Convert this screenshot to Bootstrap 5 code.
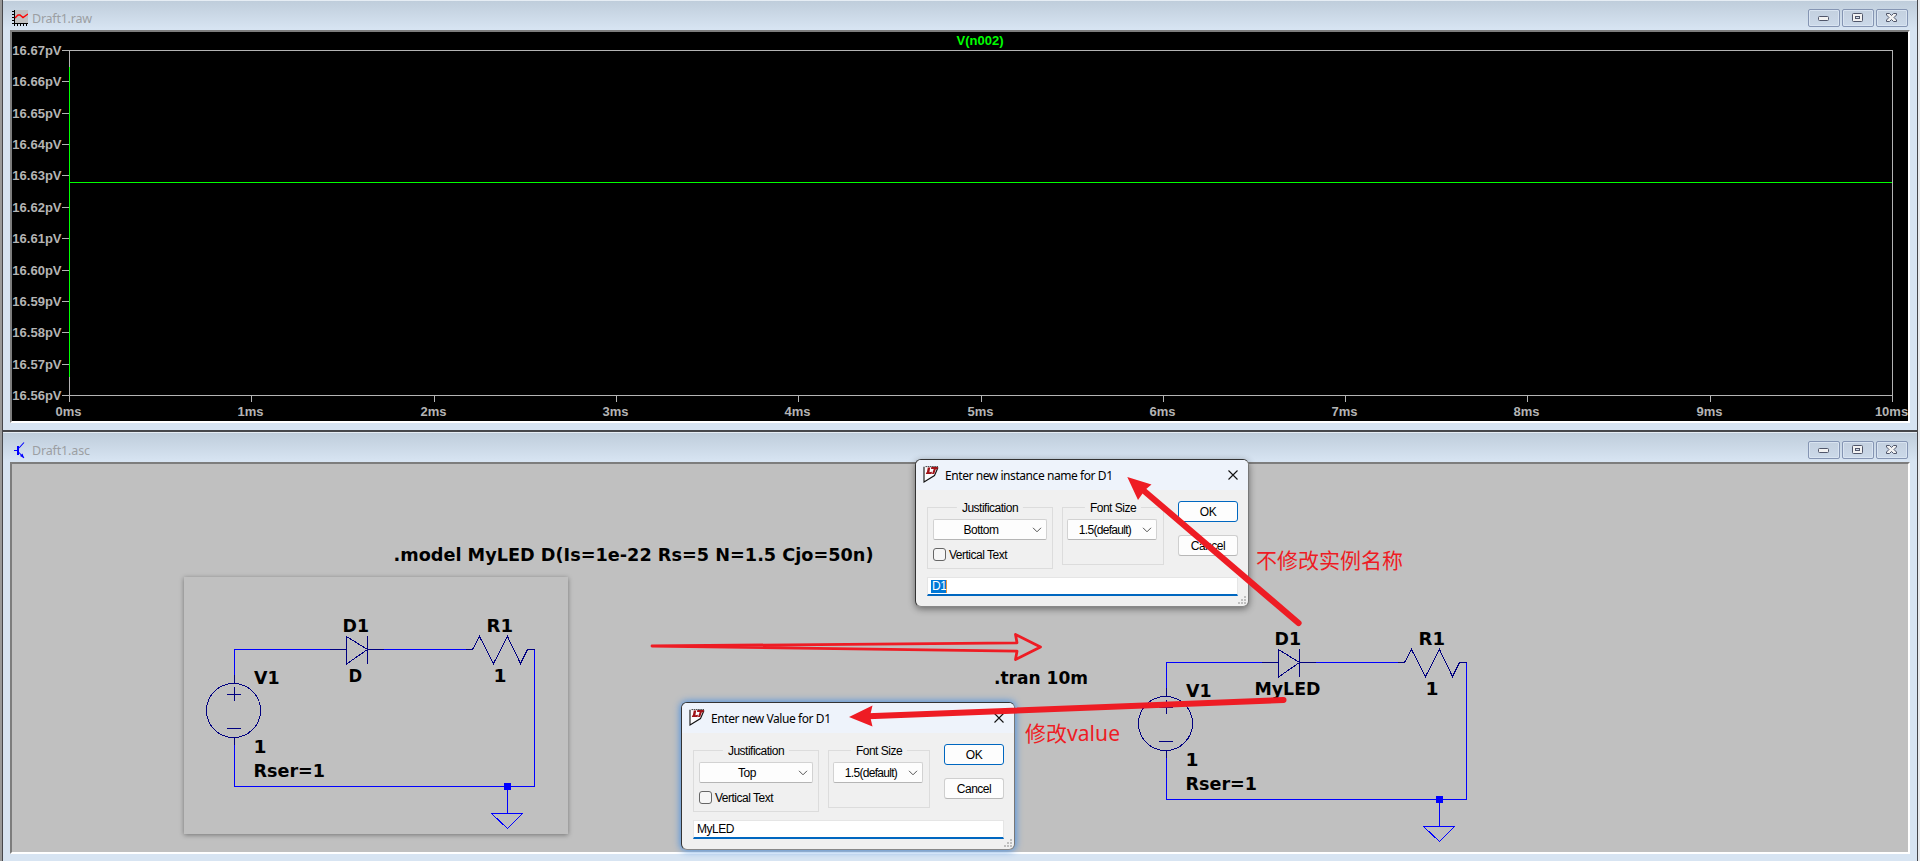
<!DOCTYPE html>
<html lang="en">
<head>
<meta charset="utf-8">
<title>Draft1</title>
<link href="https://cdn.jsdelivr.net/npm/bootstrap@5.3.0/dist/css/bootstrap.min.css" rel="stylesheet">
<script src="https://cdn.jsdelivr.net/npm/bootstrap@5.3.0/dist/js/bootstrap.bundle.min.js"></script>
<style>
body{width:1920px;height:861px;overflow:hidden;background:#e9ebee;font-family:"Liberation Sans",sans-serif;font-size:12px;line-height:1;color:#000}
.desk{width:1920px;height:861px;overflow:hidden;background:linear-gradient(90deg,#999 2px,#e9ebee 2px)}
.mdi{width:1916px;margin-left:2px;border:solid #46474b;border-width:0 1px 0 1px;background:#d7e4f2;position:relative}
.mdi.plotwin{height:432px;border-bottom-width:2px}
.mdi.schwin{height:429px}
.mdi-title{height:30px;padding:9px 8px 3px 9px;background:linear-gradient(#e6edf4 1px,#bfcddb 1px,#d7e4f2 29px);font:12.5px "Noto Sans",sans-serif;color:#9c9fa3}
.caps{gap:2px;margin-right:1px}
.mdi-title .cap{width:32px;height:18px;border:1px solid #8595b3;border-radius:2px;box-shadow:inset 0 0 0 1px #d9e4f1;background:linear-gradient(#c3d0df,#cbd9e9)}
.cap svg{display:block;margin:auto}
.client{margin:0 7px;width:1900px;border:2px solid;border-color:#7d7d7d #fff #fff #7d7d7d;box-sizing:border-box}
.plotwin .client{height:393px}
.schwin .client{height:392px;background:#c0c0c0}
svg{display:block}
.axis{font:bold 13px "Liberation Sans",sans-serif;fill:#b4b4b4}
.axis path{shape-rendering:crispEdges}
.schem{font:bold 18.3px "DejaVu Sans Condensed","DejaVu Sans",sans-serif;font-stretch:condensed;fill:#000}
.dlg{width:334px;height:148px;background:#f0f0f0;border:1px solid #3b3b3b;border-color:#333 #777 #888 #333;border-radius:6px;box-shadow:0 2px 7px rgba(0,0,0,.45);letter-spacing:-.5px}
.dlg.active-dlg{box-shadow:0 0 7px 1px #4f92df}
.dlg-one{left:915px;top:459px}
.dlg-two{left:681px;top:702px}
.dlg-title{height:30px;padding:0 10px 1px 7px;background:#eef3fb;border-radius:5px 5px 0 0;font:12px "Noto Sans",sans-serif;letter-spacing:0}
.dlg-body{padding:11px 10px 0 11px}
.grp{border:1px solid #dcdcdc;margin-top:6px;padding:11px 5px 0;position:relative}
.grp .cap-text{top:-7px;background:#f0f0f0;padding:0 5px;line-height:14px;white-space:nowrap}
.grp-a{width:126px;height:62px}
.grp-b{width:102px;height:58px;padding-left:4px;margin-left:9px}
.combo{height:21px;background:#fdfdfd;border:1px solid #d2d2d2;border-bottom-color:#b5b5b5;border-radius:2px;padding-right:4px}
.combo span{padding-right:4px}
.combo-b{width:90px}
.combo-b span{padding-right:0;letter-spacing:-.7px}
.tick{width:13px;height:13px;border:1px solid #666;border-radius:3px;background:#f6f6f6;margin-right:3px}
.push{width:60px;height:21px;border:1px solid #cfcfcf;border-bottom-color:#b7b7b7;border-radius:3px;background:#fdfdfd}
.push.default{border-color:#0067c0;margin-bottom:13px}
.field{height:19px;margin-top:8px;background:#fff;border:1px solid #e5e5e5;border-bottom:2px solid #0067c0;padding:0 3px}
.sel{background:#0078d7;color:#fff;border-right:1px solid #e89640;line-height:13px;padding-left:1px}
.grip{right:2px;bottom:2px}
.notes{font:21px "Noto Sans","Noto Sans CJK SC",sans-serif;fill:#ee1c24;pointer-events:none}
.notes .cjk{font-family:"Noto Sans CJK SC",sans-serif}
</style>
</head>
<body>
<svg width="0" height="0" class="position-absolute">
 <defs>
  <symbol id="i-min" viewBox="0 0 12 12"><rect x=".5" y="4.5" width="10" height="4" rx="1" fill="#f2f2f2" stroke="#50566a"/></symbol>
  <symbol id="i-max" viewBox="0 0 12 12"><rect x=".5" y=".5" width="10" height="8" rx="1" fill="#f2f2f2" stroke="#50566a"/><rect x="3.5" y="3.5" width="4" height="2" fill="#d5deeb" stroke="#50566a"/></symbol>
  <symbol id="i-close" viewBox="0 0 12 12"><path d="M.5.5H3.5L5.5 2.5L7.5.5H10.5V2L8 4.5L10.5 7V8.5H7.5L5.5 6.5L3.5 8.5H.5V7L3 4.5L.5 2Z" fill="#f2f2f2" stroke="#50566a"/></symbol>
  <symbol id="i-lt" viewBox="0 0 16 17"><path d="M1 .8V16L11.5 9.5L15 1.5" fill="#fbfbfd" stroke="#111" stroke-width="1.1"/><path d="M2.5.6H15" stroke="#111" stroke-width=".8" stroke-dasharray="1.6 .6"/><path d="M4.8 1.5H7.2L6.4 6.3L9 5.7L8.6 8H2.9L3.1 6.5H3.8ZM8.3 1H15L14.5 3.3H12.8L11.2 8H9L10.7 3.1H8Z" fill="#a01318"/></symbol>
  <symbol id="i-x" viewBox="0 0 10 10"><path d="M.5.5L9.5 9.5M9.5.5L.5 9.5" stroke="#111" stroke-width="1.1"/></symbol>
  <symbol id="i-chev" viewBox="0 0 10 6"><path d="M1 .8L5 4.8L9 .8" fill="none" stroke="#555"/></symbol>
  <symbol id="i-grip" viewBox="0 0 8 8"><path d="M6 0h2v2H6zM3 3h2v2H3zM6 3h2v2H6zM0 6h2v2H0zM3 6h2v2H3zM6 6h2v2H6z" fill="#bfbfbf"/></symbol>
  <g id="circuit" fill="none" shape-rendering="crispEdges">
   <path d="M330.5 649.5H234.5V675M384 649.5H466M534.5 649.5V786.5H234.5V745M507.5 786.5V813.5M491.5 813.5H522.5L507.5 828.5Z" stroke="#00f"/>
   <path d="M234.5 675V683M234.5 738V745M227 694.5H241M234.5 687V701M227 728.5H241M330 649.5H346M346.5 636V664L367.5 649.5L346.5 636.5M367.5 636V664M367 649.5H384M466 649.5H472.5L479.5 636.5L493.5 663.5L507.5 636.5L520.5 663.5L527.5 649.5H534.5" stroke="#000080"/>
   <circle cx="233.5" cy="710.5" r="27" stroke="#000080"/>
   <rect x="504" y="783" width="7" height="7" fill="#00f"/>
  </g>
  <g id="circuit-text">
   <text x="342.5" y="632" textLength="26.5" lengthAdjust="spacingAndGlyphs">D1</text>
   <text x="486.5" y="632" textLength="26.5" lengthAdjust="spacingAndGlyphs">R1</text>
   <text x="493.5" y="682" textLength="13" lengthAdjust="spacingAndGlyphs">1</text>
   <text x="254" y="684" textLength="25.5" lengthAdjust="spacingAndGlyphs">V1</text>
   <text x="253.5" y="753" textLength="13" lengthAdjust="spacingAndGlyphs">1</text>
   <text x="253.5" y="777" textLength="71.5" lengthAdjust="spacingAndGlyphs">Rser=1</text>
  </g>
 </defs>
</svg>

<main class="desk position-relative d-flex flex-column">
 <section class="mdi plotwin">
  <header class="mdi-title d-flex align-items-center">
   <svg width="16" height="17" viewBox="0 0 16 17"><path d="M2 0h14v14H2z" fill="#c0c0c0"/><path d="M2.5 0V14M2 13.5H16" stroke="#000"/><path d="M0 1.5h2M0 4.5h2M0 7.5h2M0 10.5h2M0 13.5h2M2.5 14v2M5.5 14v2M8.5 14v2M11.5 14v2M14.5 14v2" stroke="#000"/><path d="M3 8L6 5L8 5L11 7.5L16 4" fill="none" stroke="red" stroke-width="1.4"/></svg>
   <span class="ms-1 me-auto"><svg width="62" height="18"><text x="0" y="14" textLength="60" fill="#9c9fa3">Draft1.raw</text></svg></span>
   <div class="d-flex caps"><span class="cap d-flex align-items-center"><svg width="12" height="12"><use href="#i-min"/></svg></span><span class="cap d-flex align-items-center"><svg width="12" height="10" viewBox="0 0 12 10"><use href="#i-max" width="12" height="12"/></svg></span><span class="cap d-flex align-items-center"><svg width="12" height="10" viewBox="0 0 12 10"><use href="#i-close" width="12" height="12"/></svg></span></div>
  </header>
  <div class="client bg-black">
   <svg width="1896" height="389" viewBox="12 32 1896 389" class="axis" id="plot">
    <path d="M69.5 50.5H1892.5V402M62 50.5H69.5V402M62 395.5H1892" fill="none" stroke="#b4b4b4"/>
    <g id="ticks" stroke="#b4b4b4"></g>
    <path d="M69.5 67V377M69 182.5H1892" stroke="#0f0"/>
    <text x="980" y="45" text-anchor="middle" fill="#0f0">V(n002)</text>
   </svg>
  </div>
 </section>

 <section class="mdi schwin">
  <header class="mdi-title d-flex align-items-center">
   <svg width="16" height="17" viewBox="0 0 16 17"><path d="M2 8.5H5" stroke="#00f"/><path d="M5 4h2v9H5z" fill="#00f"/><path d="M7 6L12 .5M7 10.5L12 16" stroke="#00f" stroke-width="1.1"/><path d="M12 16L8 14L10.5 11.5Z" fill="#00f"/></svg>
   <span class="ms-1 me-auto"><svg width="62" height="18"><text x="0" y="14" textLength="58" fill="#9c9fa3">Draft1.asc</text></svg></span>
   <div class="d-flex caps"><span class="cap d-flex align-items-center"><svg width="12" height="12"><use href="#i-min"/></svg></span><span class="cap d-flex align-items-center"><svg width="12" height="10" viewBox="0 0 12 10"><use href="#i-max" width="12" height="12"/></svg></span><span class="cap d-flex align-items-center"><svg width="12" height="10" viewBox="0 0 12 10"><use href="#i-close" width="12" height="12"/></svg></span></div>
  </header>
  <div class="client">
   <svg width="1896" height="388" viewBox="12 464 1896 388" class="schem">
    <defs><filter id="soft" x="-5%" y="-5%" width="110%" height="112%"><feDropShadow dx="0" dy="1" stdDeviation="2.5" flood-color="#000" flood-opacity=".4"/></filter></defs>
    <rect x="184" y="577" width="384" height="257" fill="#c0c0c0" filter="url(#soft)"/>
    <use href="#circuit"/><use href="#circuit-text"/>
    <use href="#circuit" x="932" y="13"/><use href="#circuit-text" x="932" y="13"/>
    <text x="348.5" y="682">D</text>
    <text x="1254.5" y="695" textLength="66" lengthAdjust="spacingAndGlyphs">MyLED</text>
    <text x="393.5" y="561" textLength="480" lengthAdjust="spacingAndGlyphs">.model MyLED D(Is=1e-22 Rs=5 N=1.5 Cjo=50n)</text>
    <text x="994" y="684" textLength="94" lengthAdjust="spacingAndGlyphs">.tran 10m</text>
   </svg>
  </div>
 </section>

 <section class="dlg dlg-one position-absolute">
  <header class="dlg-title d-flex align-items-center">
   <svg width="16" height="17"><use href="#i-lt"/></svg>
   <svg class="ms-1 me-auto" width="170" height="18"><text x="2" y="13.5" textLength="168">Enter new instance name for D1</text></svg>
   <svg width="10" height="10"><use href="#i-x"/></svg>
  </header>
  <div class="dlg-body">
   <div class="d-flex align-items-start">
    <div class="grp grp-a"><span class="cap-text position-absolute start-50 translate-middle-x">Justification</span>
     <div class="combo d-flex align-items-center"><span class="flex-fill text-center">Bottom</span><svg width="10" height="6"><use href="#i-chev"/></svg></div>
     <div class="d-flex align-items-center mt-2"><span class="tick"></span><span>Vertical Text</span></div></div>
    <div class="grp grp-b"><span class="cap-text position-absolute start-50 translate-middle-x">Font Size</span>
     <div class="combo combo-b d-flex align-items-center"><span class="flex-fill text-center">1.5(default)</span><svg width="10" height="6"><use href="#i-chev"/></svg></div></div>
    <div class="ms-auto"><div class="push default d-flex align-items-center justify-content-center">OK</div><div class="push d-flex align-items-center justify-content-center">Cancel</div></div>
   </div>
   <div class="field d-flex align-items-center"><span class="sel">D1</span></div>
  </div>
  <svg class="grip position-absolute" width="8" height="8"><use href="#i-grip"/></svg>
 </section>

 <section class="dlg dlg-two active-dlg position-absolute">
  <header class="dlg-title d-flex align-items-center">
   <svg width="16" height="17"><use href="#i-lt"/></svg>
   <svg class="ms-1 me-auto" width="170" height="18"><text x="2" y="13.5" textLength="120">Enter new Value for D1</text></svg>
   <svg width="10" height="10"><use href="#i-x"/></svg>
  </header>
  <div class="dlg-body">
   <div class="d-flex align-items-start">
    <div class="grp grp-a"><span class="cap-text position-absolute start-50 translate-middle-x">Justification</span>
     <div class="combo d-flex align-items-center"><span class="flex-fill text-center">Top</span><svg width="10" height="6"><use href="#i-chev"/></svg></div>
     <div class="d-flex align-items-center mt-2"><span class="tick"></span><span>Vertical Text</span></div></div>
    <div class="grp grp-b"><span class="cap-text position-absolute start-50 translate-middle-x">Font Size</span>
     <div class="combo combo-b d-flex align-items-center"><span class="flex-fill text-center">1.5(default)</span><svg width="10" height="6"><use href="#i-chev"/></svg></div></div>
    <div class="ms-auto"><div class="push default d-flex align-items-center justify-content-center">OK</div><div class="push d-flex align-items-center justify-content-center">Cancel</div></div>
   </div>
   <div class="field d-flex align-items-center">MyLED</div>
  </div>
  <svg class="grip position-absolute" width="8" height="8"><use href="#i-grip"/></svg>
 </section>

 <svg class="notes position-absolute top-0 start-0" width="1920" height="861">
  <path d="M652 646L1017 642.8L1015.5 634.5L1040.5 647L1015.5 659.5L1017 651.2Z" fill="none" stroke="#ee1c24" stroke-width="2.8" stroke-linejoin="round"/>
  <path d="M1298.5 623L1143 490" stroke="#ee1c24" stroke-width="6.2" stroke-linecap="round"/>
  <path d="M1127.3 477L1151.5 484.5L1145 490L1138 500Z" fill="#ee1c24"/>
  <path d="M1283.5 700L868 716.3" stroke="#ee1c24" stroke-width="6" stroke-linecap="round"/>
  <path d="M849 717L872.5 705.5L870 716L872.5 726.5Z" fill="#ee1c24"/>
  <text class="cjk" x="1256" y="568" textLength="147">不修改实例名称</text>
  <text class="cjk" x="1025" y="740.5">修改</text>
  <text x="1067" y="740.5" textLength="53">value</text>
 </svg>
</main>
<script>
// Axis ticks and labels: eleven 0.01 pV steps down the left, ten 1 ms steps across.
const ns='http://www.w3.org/2000/svg',plot=document.getElementById('plot'),ticks=document.getElementById('ticks');
function tick(d){const p=document.createElementNS(ns,'path');p.setAttribute('d',d);ticks.appendChild(p)}
function label(x,y,s,a){const t=document.createElementNS(ns,'text');t.setAttribute('x',x);t.setAttribute('y',y);t.setAttribute('text-anchor',a);t.textContent=s;plot.appendChild(t)}
for(let i=0;i<=11;i++){const y=Math.round(50+i*345/11);tick(`M62 ${y+.5}H69`);label(61.5,y+5,(16.67-i/100).toFixed(2)+'pV','end')}
for(let i=0;i<=10;i++){const x=Math.round(69+i*182.3);tick(`M${x+.5} 395V402`);label(x-.5,416,i+'ms','middle')}
</script>
</body>
</html>
